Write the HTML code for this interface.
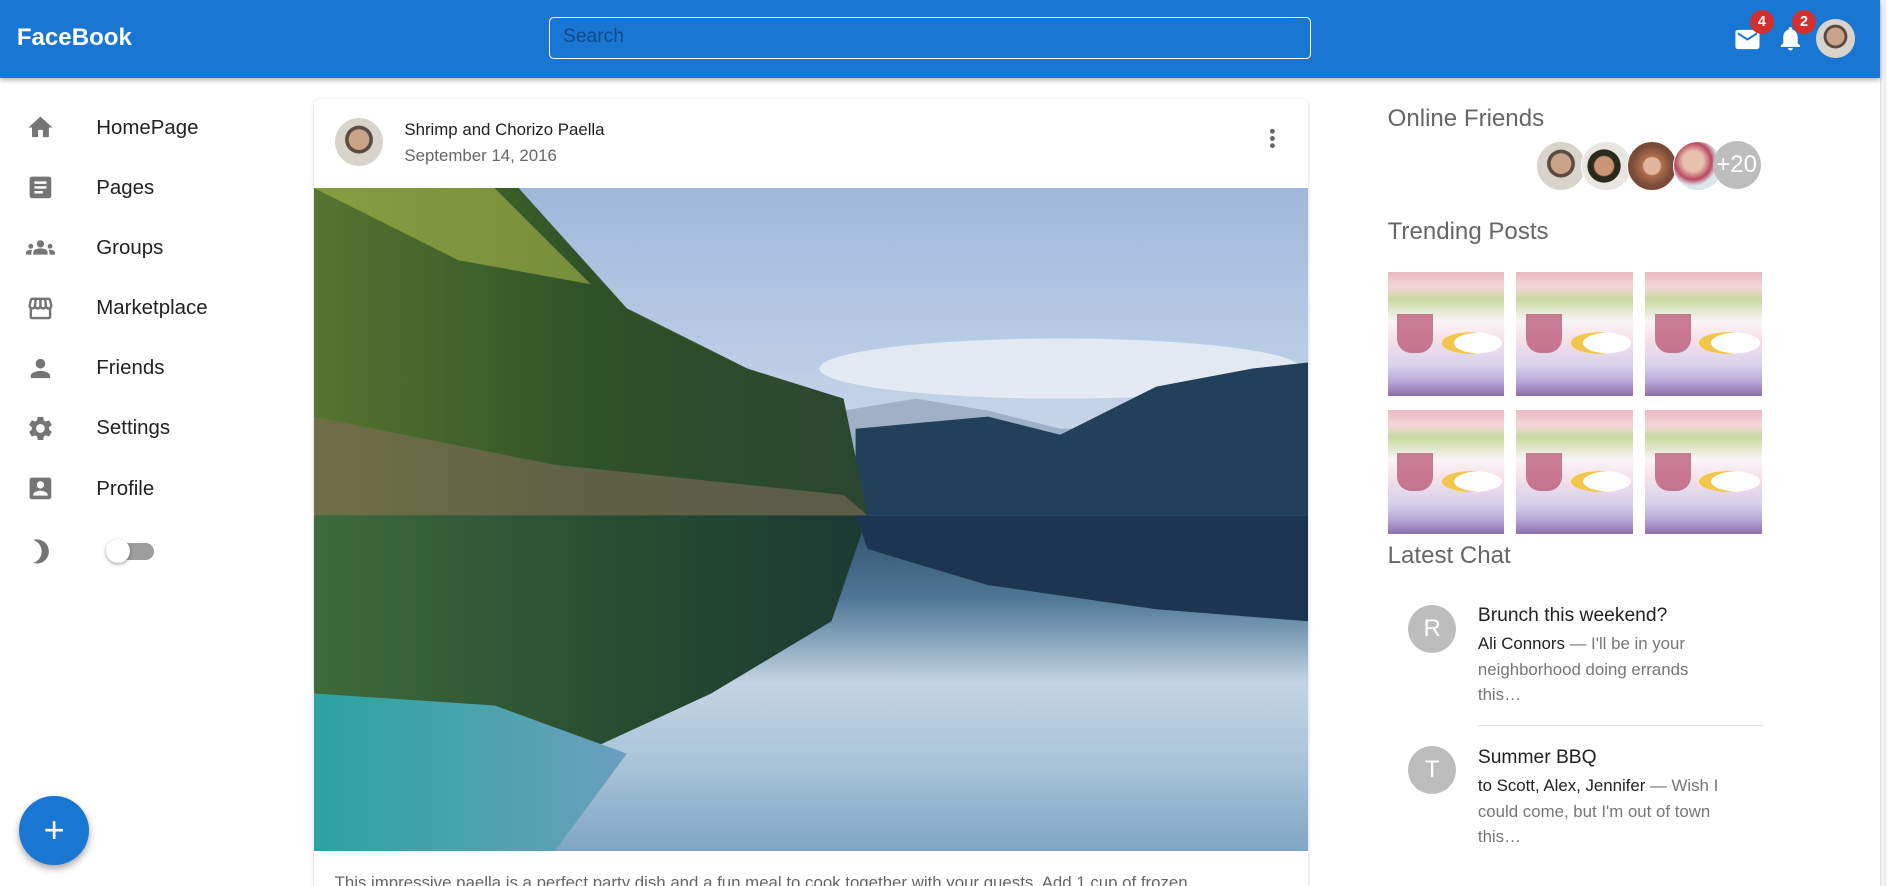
<!DOCTYPE html>
<html><head><meta charset="utf-8">
<style>
html,body{margin:0;padding:0;overflow:hidden;}
body{zoom:1.2035;width:1568px;height:736px;position:relative;background:#fff;font-family:"Liberation Sans",Roboto,sans-serif;color:rgba(0,0,0,.87);overflow:hidden}
.a{position:absolute;}
.hdr{left:0;top:0;width:1562px;height:65px;background:#1976d2;box-shadow:0 2px 4px rgba(0,0,0,.3);z-index:2}
.sb{left:1562px;top:0;width:6px;height:736px;background:#f1f1f1;border-left:1px solid #e2e2e2}
.logo{left:14px;top:20px;color:#fff;font-weight:bold;font-size:20px}
.search{left:456px;top:14px;width:632px;height:33px;border:1px solid #fff;border-radius:4px;}
.search span{position:absolute;left:11px;top:7px;font-size:16px;color:#0d3f7a;opacity:.8}
.badge{width:20px;height:20px;border-radius:50%;background:#d32f2f;color:#fff;font-size:12px;font-weight:bold;text-align:center;line-height:20px}
.av{border-radius:50%;overflow:hidden}
.nav{left:0;font-size:17px;color:#222}
.nav svg{position:absolute;left:22px;top:-2px}
.nav span{position:absolute;left:80px;top:0}
.card{left:261px;top:82px;width:826px;height:654px;background:#fff;box-shadow:0 1px 3px rgba(0,0,0,.2);border-radius:4px 4px 0 0;overflow:hidden}
.h2{font-size:20px;font-weight:300;color:#666;left:1153px}
.tp{width:97px;height:103px;background:linear-gradient(180deg,#e9b8c0 0%,#f3d6d8 12%,#c9d9a0 22%,#fbf4f8 40%,#f5e0e8 55%,#d7d2ee 75%,#b9a9d9 88%,#8d6fa9 100%);overflow:hidden}
.tp:before{content:"";position:absolute;left:8px;top:35px;width:30px;height:32px;border-radius:0 0 12px 12px;background:#b34a6a;opacity:.7}
.tp:after{content:"";position:absolute;left:45px;top:50px;width:50px;height:18px;border-radius:50%;background:#fff;box-shadow:inset 10px 0 0 #f2c64b}
.cav{width:40px;height:40px;border-radius:50%;background:#bdbdbd;color:#fff;font-size:20px;text-align:center;line-height:40px}
.ct{font-size:16px;color:#222}
.cs{font-size:14px;color:#777;line-height:21.5px;width:210px}
.cs b{font-weight:normal;color:#222}
</style></head><body>
<div class="a sb"></div>
<div class="a hdr">
 <div class="a logo">FaceBook</div>
 <div class="a search"><span>Search</span></div>
 <svg class="a" style="left:1440px;top:21px" width="24" height="24" viewBox="0 0 24 24"><path fill="#fff" d="M20 4H4c-1.1 0-2 .9-2 2v12c0 1.1.9 2 2 2h16c1.1 0 2-.9 2-2V6c0-1.1-.9-2-2-2zm0 4l-8 5-8-5V6l8 5 8-5v2z"/></svg>
 <div class="a badge" style="left:1454px;top:8px">4</div>
 <svg class="a" style="left:1476px;top:20px" width="24" height="24" viewBox="0 0 24 24"><path fill="#fff" d="M12 22c1.1 0 2-.9 2-2h-4c0 1.1.9 2 2 2zm6-6v-5c0-3.07-1.63-5.64-4.5-6.32V4c0-.83-.67-1.5-1.5-1.5s-1.5.67-1.5 1.5v.68C7.64 5.36 6 7.92 6 11v5l-2 2v1h16v-1l-2-2z"/></svg>
 <div class="badge a" style="left:1489px;top:8px">2</div>
 <div class="a av" style="left:1509px;top:16px;width:32px;height:32px;background:radial-gradient(circle at 50% 45%,#c9a48a 0 30%,#5a4a40 32% 40%,#d8d4cc 42%)"></div>
</div>

<div class="a nav" style="top:96px"><svg width="24" height="24" viewBox="0 0 24 24"><path fill="#757575" d="M10 20v-6h4v6h5v-8h3L12 3 2 12h3v8z"/></svg><span>HomePage</span></div>
<div class="a nav" style="top:146px"><svg width="24" height="24" viewBox="0 0 24 24"><path fill="#757575" d="M19 3H5c-1.1 0-2 .9-2 2v14c0 1.1.9 2 2 2h14c1.1 0 2-.9 2-2V5c0-1.1-.9-2-2-2zm-5 14H7v-2h7v2zm3-4H7v-2h10v2zm0-4H7V7h10v2z"/></svg><span>Pages</span></div>
<div class="a nav" style="top:196px"><svg width="24" height="24" viewBox="0 0 24 24"><path fill="#757575" d="M12 12.75c1.63 0 3.07.39 4.24.9 1.08.48 1.76 1.56 1.76 2.73V18H6v-1.61c0-1.18.68-2.260 1.76-2.73 1.17-.52 2.61-.91 4.24-.91zM4 13c1.1 0 2-.9 2-2s-.9-2-2-2-2 .9-2 2 .9 2 2 2zm1.13 1.1c-.37-.06-.74-.1-1.13-.1-.99 0-1.93.21-2.78.58C.48 14.9 0 15.62 0 16.430V18h4.5v-1.61c0-.83.23-1.61.63-2.29zM20 13c1.1 0 2-.9 2-2s-.9-2-2-2-2 .9-2 2 .9 2 2 2zm4 3.43c0-.81-.48-1.53-1.22-1.85-.85-.37-1.79-.58-2.78-.58-.39 0-.76.04-1.130.1.4.68.63 1.46.63 2.29V18H24v-1.57zM12 6c1.66 0 3 1.34 3 3s-1.34 3-3 3-3-1.34-3-3 1.34-3 3-3z"/></svg><span>Groups</span></div>
<div class="a nav" style="top:246px"><svg width="24" height="24" viewBox="0 0 24 24"><path fill="#757575" d="M21.9 8.89l-1.05-4.37c-.22-.9-1-1.52-1.91-1.52H5.05c-.9 0-1.690.63-1.9 1.52L2.1 8.89c-.24 1.02-.02 2.06.62 2.88.08.11.19.19.28.29V19c0 1.1.9 2 2 2h14c1.1 0 2-.9 2-2v-6.94c.09-.09.2-.18.28-.28.64-.82.87-1.87.62-2.89zM18.91 4.99l1.05 4.37c.1.42.01.84-.25 1.17-.14.18-.44.47-.94.47-.61 0-1.14-.49-1.21-1.14L16.98 5l1.93-.01zM13 5h1.96l.54 4.52c.05.39-.07.78-.33 1.07-.22.26-.54.41-.95.41-.67 0-1.22-.59-1.22-1.31V5zM8.49 9.52L9.04 5H11v4.69c0 .72-.55 1.31-1.29 1.31-.34 0-.65-.15-.89-.41-.25-.29-.37-.68-.33-1.07zm-4.450-.16L5.05 5h1.97l-.58 4.86c-.08.65-.6 1.14-1.21 1.14-.49 0-.8-.29-.93-.47-.27-.32-.36-.75-.26-1.17zM5 19v-6.03c.08.01.15.03.23.03.87 0 1.66-.36 2.24-.95.6.6 1.4.95 2.31.95.87 0 1.65-.36 2.23-.93.59.57 1.39.93 2.29.93.84 0 1.64-.35 2.24-.95.58.59 1.37.95 2.24.95.08 0 .15-.02.23-.03V19H5z"/></svg><span>Marketplace</span></div>
<div class="a nav" style="top:296px"><svg width="24" height="24" viewBox="0 0 24 24"><path fill="#757575" d="M12 12c2.21 0 4-1.79 4-4s-1.79-4-4-4-4 1.79-4 4 1.79 4 4 4zm0 2c-2.67 0-8 1.34-8 4v2h16v-2c0-2.66-5.33-4-8-4z"/></svg><span>Friends</span></div>
<div class="a nav" style="top:346px"><svg width="24" height="24" viewBox="0 0 24 24"><path fill="#757575" d="M19.14 12.94c.04-.3.06-.61.06-.94 0-.32-.02-.64-.07-.94l2.03-1.58a.49.49 0 00.12-.61l-1.92-3.32a.488.488 0 00-.59-.22l-2.39.96c-.5-.38-1.03-.7-1.62-.94l-.36-2.54a.484.484 0 00-.48-.41h-3.84c-.24 0-.43.17-.47.41l-.36 2.54c-.59.24-1.13.57-1.62.94l-2.39-.96c-.22-.08-.47 0-.59.22L2.74 8.87c-.12.21-.08.47.12.61l2.03 1.58c-.05.3-.09.63-.09.94s.02.64.07.94l-2.03 1.58a.49.49 0 00-.12.61l1.92 3.32c.12.22.37.29.59.22l2.39-.96c.5.38 1.03.7 1.62.94l.36 2.54c.05.24.24.41.48.41h3.84c.24 0 .44-.17.47-.41l.36-2.54c.59-.24 1.13-.56 1.62-.94l2.39.96c.22.08.47 0 .59-.22l1.92-3.32c.12-.22.07-.47-.12-.61l-2.01-1.58zM12 15.6c-1.98 0-3.6-1.62-3.6-3.6s1.62-3.6 3.6-3.6 3.6 1.62 3.6 3.6-1.62 3.6-3.6 3.6z"/></svg><span>Settings</span></div>
<div class="a nav" style="top:396px"><svg width="24" height="24" viewBox="0 0 24 24"><path fill="#757575" d="M3 5v14c0 1.1.89 2 2 2h14c1.1 0 2-.9 2-2V5c0-1.1-.9-2-2-2H5c-1.11 0-2 .9-2 2zm12 4c0 1.66-1.34 3-3 3s-3-1.34-3-3 1.34-3 3-3 3 1.34 3 3zm-9 8c0-2 4-3.1 6-3.1s6 1.1 6 3.1v1H6v-1z"/></svg><span>Profile</span></div>
<svg class="a" style="left:22px;top:446px" width="24" height="24" viewBox="0 0 24 24"><path fill="#757575" d="M9 2c-1.05 0-2.05.16-3 .46 4.06 1.27 7 5.06 7 9.54 0 4.48-2.94 8.27-7 9.54.95.3 1.95.46 3 .46 5.52 0 10-4.48 10-10S14.52 2 9 2z"/></svg>
<div class="a" style="left:92px;top:451px;width:36px;height:14px;border-radius:7px;background:#9e9e9e"></div>
<div class="a" style="left:88px;top:448px;width:20px;height:20px;border-radius:50%;background:#fff;box-shadow:0 1px 3px rgba(0,0,0,.4)"></div>
<div class="a" style="left:16px;top:661px;width:58px;height:58px;border-radius:50%;background:#1976d2;box-shadow:0 3px 6px rgba(0,0,0,.35);color:#fff;font-size:30px;text-align:center;line-height:56px;font-weight:300;z-index:3">+</div>

<div class="a card">
 <div class="a av" style="left:17px;top:16px;width:40px;height:40px;background:radial-gradient(circle at 50% 45%,#c9a48a 0 28%,#5a4a40 30% 38%,#d8d4cc 40%)"></div>
 <div class="a" style="left:75px;top:18px;font-size:14px;color:#222">Shrimp and Chorizo Paella</div>
 <div class="a" style="left:75px;top:39px;font-size:14px;color:#666">September 14, 2016</div>
 <svg class="a" style="left:784px;top:21px" width="24" height="24" viewBox="0 0 24 24"><path fill="#666" d="M12 8c1.1 0 2-.9 2-2s-.9-2-2-2-2 .9-2 2 .9 2 2 2zm0 2c-1.1 0-2 .9-2 2s.9 2 2 2 2-.9 2-2-.9-2-2-2zm0 6c-1.1 0-2 .9-2 2s.9 2 2 2 2-.9 2-2-.9-2-2-2z"/></svg>
 <svg class="a" style="left:0;top:74px" width="826" height="551" viewBox="0 0 826 551">
  <defs>
   <linearGradient id="sky" x1="0" y1="0" x2="0" y2="1"><stop offset="0" stop-color="#9fb8da"/><stop offset=".5" stop-color="#d5e1ef"/><stop offset="1" stop-color="#eaf0f6"/></linearGradient>
   <linearGradient id="wat" x1="0" y1="0" x2="0" y2="1"><stop offset="0" stop-color="#2e4d6a"/><stop offset=".25" stop-color="#4f7896"/><stop offset=".5" stop-color="#c3d5e4"/><stop offset=".75" stop-color="#a7c3d8"/><stop offset="1" stop-color="#7fa6c4"/></linearGradient>
   <linearGradient id="for" x1="0" y1="0" x2="1" y2="0"><stop offset="0" stop-color="#56752f"/><stop offset=".5" stop-color="#2e5228"/><stop offset="1" stop-color="#2a4630"/></linearGradient>
   <linearGradient id="rfl" x1="0" y1="0" x2="1" y2="0"><stop offset="0" stop-color="#3f6a3a"/><stop offset=".6" stop-color="#254a30"/><stop offset="1" stop-color="#1c3a34"/></linearGradient>
   <linearGradient id="teal" x1="0" y1="0" x2="1" y2="0"><stop offset="0" stop-color="#2aa3a0"/><stop offset=".6" stop-color="#4fa3ad"/><stop offset="1" stop-color="#6c9ec0"/></linearGradient>
  </defs>
  <rect width="826" height="551" fill="url(#sky)"/>
  <ellipse cx="620" cy="150" rx="200" ry="25" fill="#f2f5f9" opacity=".7"/>
  <polygon points="440,185 500,175 560,185 620,200 640,200 640,230 440,230" fill="#9eb1c6"/>
  <polygon points="450,200 560,190 620,205 700,165 780,150 826,145 826,272 450,272" fill="#23405a"/>
  <polygon points="0,0 170,0 260,100 360,150 440,175 460,272 0,272" fill="url(#for)"/>
  <polygon points="0,0 150,0 230,80 120,60" fill="#a6b84a" opacity=".6"/>
  <polygon points="0,190 200,230 440,255 460,272 0,278" fill="#7e6a58" opacity=".6"/>
  <rect y="272" width="826" height="279" fill="url(#wat)"/>
  <polygon points="0,272 460,272 430,360 330,420 200,480 0,500" fill="url(#rfl)"/>
  <polygon points="0,420 150,430 260,470 200,551 0,551" fill="url(#teal)"/>
  <polygon points="450,272 826,272 826,360 700,350 560,330 460,300" fill="#1c3651"/>
 </svg>
 <div class="a" style="left:17px;top:643px;font-size:14px;color:#666;white-space:nowrap">This impressive paella is a perfect party dish and a fun meal to cook together with your guests. Add 1 cup of frozen</div>
</div>

<div class="a h2" style="top:87px">Online Friends</div>
<div class="a av" style="left:1276px;top:117px;width:40px;height:40px;background:radial-gradient(circle at 50% 45%,#c9a48a 0 28%,#5a4a40 30% 38%,#d8d4cc 40%);border:1px solid #fff"></div>
<div class="a av" style="left:1314px;top:117px;width:40px;height:40px;background:radial-gradient(circle at 45% 50%,#c99575 0 26%,#2a2a1c 30% 45%,#e8e6e0 47%);border:1px solid #fff"></div>
<div class="a av" style="left:1352px;top:117px;width:40px;height:40px;background:radial-gradient(circle at 50% 50%,#e3b49b 0 25%,#b0704e 28%,#7a4a3a 60%);border:1px solid #fff"></div>
<div class="a av" style="left:1390px;top:117px;width:40px;height:40px;background:radial-gradient(circle at 40% 40%,#e8c0ae 0 25%,#b9495e 45%,#dce6ea 60%);border:1px solid #fff"></div>
<div class="a av" style="left:1423px;top:117px;width:40px;height:40px;background:#bdbdbd;color:#fff;font-size:20px;line-height:40px;text-align:center">+20</div>

<div class="a h2" style="top:181px">Trending Posts</div>
<div class="a tp" style="left:1153px;top:226px"></div>
<div class="a tp" style="left:1260px;top:226px"></div>
<div class="a tp" style="left:1367px;top:226px"></div>
<div class="a tp" style="left:1153px;top:341px"></div>
<div class="a tp" style="left:1260px;top:341px"></div>
<div class="a tp" style="left:1367px;top:341px"></div>

<div class="a h2" style="top:450px">Latest Chat</div>
<div class="a cav" style="left:1170px;top:503px">R</div>
<div class="a ct" style="left:1228px;top:503px">Brunch this weekend?</div>
<div class="a cs" style="left:1228px;top:524px"><b>Ali Connors</b> — I'll be in your neighborhood doing errands this…</div>
<div class="a" style="left:1228px;top:602px;width:237px;height:1px;background:#e0e0e0"></div>
<div class="a cav" style="left:1170px;top:620px">T</div>
<div class="a ct" style="left:1228px;top:621px">Summer BBQ</div>
<div class="a cs" style="left:1228px;top:642px"><b>to Scott, Alex, Jennifer</b> — Wish I could come, but I'm out of town this…</div>
</body></html>
